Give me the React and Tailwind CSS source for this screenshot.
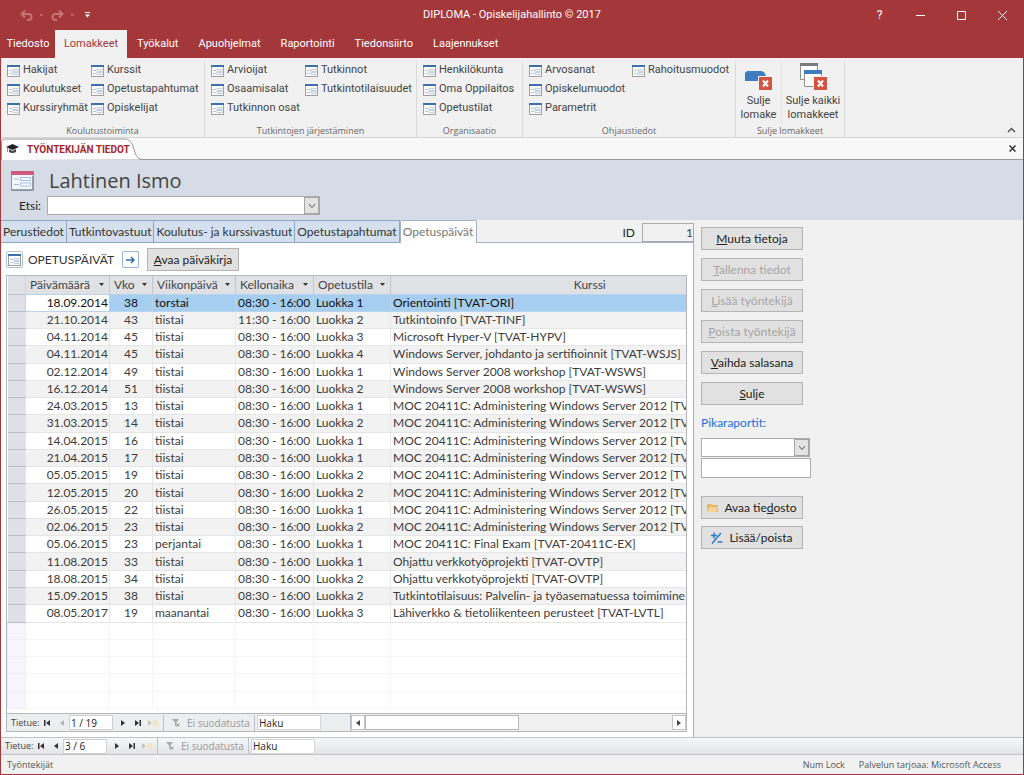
import React from 'react';

const ribbonGroups = [
  {
    title: 'Koulutustoiminta',
    width: 'w-[204px]',
    columns: [
      { width: 'w-[84px]', items: ['Hakijat', 'Koulutukset', 'Kurssiryhmät'] },
      { width: 'w-[108px]', items: ['Kurssit', 'Opetustapahtumat', 'Opiskelijat'] },
    ],
  },
  {
    title: 'Tutkintojen järjestäminen',
    width: 'w-[212px]',
    columns: [
      { width: 'w-[94px]', items: ['Arvioijat', 'Osaamisalat', 'Tutkinnon osat'] },
      { width: 'w-[108px]', items: ['Tutkinnot', 'Tutkintotilaisuudet'] },
    ],
  },
  {
    title: 'Organisaatio',
    width: 'w-[106px]',
    columns: [{ width: 'w-[96px]', items: ['Henkilökunta', 'Oma Oppilaitos', 'Opetustilat'] }],
  },
  {
    title: 'Ohjaustiedot',
    width: 'w-[213px]',
    columns: [
      { width: 'w-[103px]', items: ['Arvosanat', 'Opiskelumuodot', 'Parametrit'] },
      { width: 'w-[100px]', items: ['Rahoitusmuodot'] },
    ],
  },
];

const ribbonTabs = ['Tiedosto', 'Lomakkeet', 'Työkalut', 'Apuohjelmat', 'Raportointi', 'Tiedonsiirto', 'Laajennukset'];

const formTabs = ['Perustiedot', 'Tutkintovastuut', 'Koulutus- ja kurssivastuut', 'Opetustapahtumat', 'Opetuspäivät'];

const MOC = 'MOC 20411C: Administering Windows Server 2012 [TVAT';

const rows = [
  ['18.09.2014', '38', 'torstai', '08:30 - 16:00', 'Luokka 1', 'Orientointi [TVAT-ORI]'],
  ['21.10.2014', '43', 'tiistai', '11:30 - 16:00', 'Luokka 2', 'Tutkintoinfo [TVAT-TINF]'],
  ['04.11.2014', '45', 'tiistai', '08:30 - 16:00', 'Luokka 3', 'Microsoft Hyper-V [TVAT-HYPV]'],
  ['04.11.2014', '45', 'tiistai', '08:30 - 16:00', 'Luokka 4', 'Windows Server, johdanto ja sertifioinnit [TVAT-WSJS]'],
  ['02.12.2014', '49', 'tiistai', '08:30 - 16:00', 'Luokka 1', 'Windows Server 2008 workshop [TVAT-WSWS]'],
  ['16.12.2014', '51', 'tiistai', '08:30 - 16:00', 'Luokka 2', 'Windows Server 2008 workshop [TVAT-WSWS]'],
  ['24.03.2015', '13', 'tiistai', '08:30 - 16:00', 'Luokka 1', MOC],
  ['31.03.2015', '14', 'tiistai', '08:30 - 16:00', 'Luokka 2', MOC],
  ['14.04.2015', '16', 'tiistai', '08:30 - 16:00', 'Luokka 1', MOC],
  ['21.04.2015', '17', 'tiistai', '08:30 - 16:00', 'Luokka 1', MOC],
  ['05.05.2015', '19', 'tiistai', '08:30 - 16:00', 'Luokka 2', MOC],
  ['12.05.2015', '20', 'tiistai', '08:30 - 16:00', 'Luokka 2', MOC],
  ['26.05.2015', '22', 'tiistai', '08:30 - 16:00', 'Luokka 1', MOC],
  ['02.06.2015', '23', 'tiistai', '08:30 - 16:00', 'Luokka 2', MOC],
  ['05.06.2015', '23', 'perjantai', '08:30 - 16:00', 'Luokka 1', 'MOC 20411C: Final Exam [TVAT-20411C-EX]'],
  ['11.08.2015', '33', 'tiistai', '08:30 - 16:00', 'Luokka 1', 'Ohjattu verkkotyöprojekti [TVAT-OVTP]'],
  ['18.08.2015', '34', 'tiistai', '08:30 - 16:00', 'Luokka 2', 'Ohjattu verkkotyöprojekti [TVAT-OVTP]'],
  ['15.09.2015', '38', 'tiistai', '08:30 - 16:00', 'Luokka 2', 'Tutkintotilaisuus: Palvelin- ja työasematuessa toimimine'],
  ['08.05.2017', '19', 'maanantai', '08:30 - 16:00', 'Luokka 3', 'Lähiverkko & tietoliikenteen perusteet [TVAT-LVTL]'],
];

const FormIcon = () => (
  <svg width="13" height="12" viewBox="0 0 13 12" className="shrink-0">
    <rect x="0.5" y="0.5" width="12" height="11" fill="#fafafa" stroke="#a0a0a0" />
    <rect width="13" height="2" fill="#3f6fa8" />
    <path d="M2 5.5h3M2 8.5h3" stroke="#c4c4c4" />
    <path d="M6 4.5h5v2h-5zM6 7.5h5v2h-5z" fill="#fff" stroke="#bcd0ea" />
  </svg>
);

const FormIconLarge = () => (
  <svg width="23" height="20" viewBox="0 0 23 20" className="shrink-0">
    <rect x="0.5" y="0.5" width="22" height="19" fill="#f3f6fd" stroke="#8a93a8" />
    <rect width="23" height="4" fill="#cf5b80" />
    <path d="M3 8h5M3 13.5h5" stroke="#a9b9dc" />
    <path d="M9.500 6.500h10v3h-10zM9.500 12h10v3h-10z" fill="#fff" stroke="#a4bfe6" />
    <path d="M1 18.500h21M21.500 5v14" stroke="#9a9fae" />
  </svg>
);

const CloseBadge = ({ x, y }) => (
  <g>
    <rect x={x - 0.5} y={y - 0.5} width="14" height="14" fill="#d35440" stroke="#f1f1f1" />
    <path d={`M${x + 4} ${y + 3.5}l5 6M${x + 9} ${y + 3.5}l-5 6`} stroke="#fff" strokeWidth="2" />
  </g>
);

const CloseFormIcon = () => (
  <svg width="32" height="28" viewBox="0 0 32 28">
    <path d="M2 10l2-2h13c4 0 6 3 6 6v4H2z" fill="#3f7cbd" />
    <CloseBadge x={16} y={14} />
  </svg>
);

const CloseAllIcon = () => (
  <svg width="32" height="28" viewBox="0 0 32 28">
    <path d="M3.500 1.500h17v15h-17z" fill="#fff" stroke="#8f8f8f" />
    <path d="M3 0h18v3H3z" fill="#7b7b7b" />
    <path d="M7.500 8.500h17v15h-17z" fill="#fff" stroke="#8f8f8f" />
    <path d="M7 7h18v4H7z" fill="#3f7cbd" />
    <CloseBadge x={17} y={14} />
  </svg>
);

const Chevron = () => (
  <svg width="8" height="6" viewBox="0 0 8 6" fill="none" stroke="#555">
    <path d="M1 1l3 3.500L7 1" />
  </svg>
);

const ComboBox = ({ id, label, className }) => (
  <div className={`relative flex h-[19px] border border-[#ababab] bg-white ${className}`}>
    <select id={id} aria-label={label} className="w-full appearance-none bg-white" />
    <span className="pointer-events-none absolute top-0 right-0 flex h-full w-[15px] items-center justify-center border border-[#a5a5a5] bg-[#e3e3e3]">
      <Chevron />
    </span>
  </div>
);

const SideButton = ({ children, disabled, className = '' }) => (
  <button
    disabled={disabled}
    className={`flex h-[23px] w-[102px] items-center justify-center border border-[#b4b4b4] bg-[#e1e1e1] text-[12px] leading-[15px] text-[#222] disabled:text-[#a5a5a5] ${className}`}
  >
    {children}
  </button>
);

const NavButton = ({ label, width, color = '#333', children }) => (
  <button aria-label={label} className={`flex h-full items-center justify-center ${width}`}>
    <svg width="8" height="8" viewBox="0 0 8 8" fill={color} className="overflow-visible">
      {children}
    </svg>
  </button>
);

const RecordNav = ({ name, position, atStart }) => (
  <div className="flex h-[16px] shrink-0 items-center font-['Open_Sans',sans-serif] text-[10px] leading-[14px] text-[#444]">
    <span className="w-[33px] pl-[4px] text-[9px]">Tietue:</span>
    <NavButton label="Ensimmäinen" width="w-[14px]">
      <path d="M1 1h1.500v6H1zM7 1v6L3 4z" />
    </NavButton>
    <NavButton label="Edellinen" width="w-[15px]" color={atStart ? '#b5b5b5' : '#333'}>
      <path d="M6 1v6L2 4z" />
    </NavButton>
    <input aria-label={`${name} numero`} defaultValue={position} className="h-[15px] w-[44px] border border-[#cfcfcf] bg-white px-[1px] text-[10px] text-[#222]" />
    <NavButton label="Seuraava" width="w-[20px]">
      <path d="M2 1v6l4-3z" />
    </NavButton>
    <NavButton label="Viimeinen" width="w-[10px]">
      <path d="M1 1v6l4-3zM5.500 1H7v6H5.500z" />
    </NavButton>
    <NavButton label="Uusi" width="w-[20px]" color="#c4c4c4">
      <path d="M-1 1v6l4-3z" />
      <path d="M4 1h5v6H4z" fill="#f3e6bd" />
    </NavButton>
    <button disabled className="flex h-full w-[92px] items-center gap-[7px] border-x border-[#bfc3c8] pl-[8px] whitespace-nowrap text-[#9a9a9a]">
      <svg width="8" height="8" viewBox="0 0 8 8" className="shrink-0">
        <path d="M0 0h7L4.500 3.500V8L3 6.500v-3z" fill="#aaa" />
        <path d="M4.500 4.500l3 3m0-3l-3 3" stroke="#999" />
      </svg>
      Ei suodatusta
    </button>
    <input aria-label={`${name} haku`} defaultValue="Haku" className="ml-[2px] h-[15px] w-[64px] border border-[#d5d5d5] bg-white px-[1px] text-[10px] text-[#222]" />
  </div>
);

const TitleBar = () => (
  <header className="bg-[#a4373a] font-[Roboto,sans-serif] text-white">
    <div className="flex h-[30px] items-center">
      <div className="flex w-[200px] items-center gap-[8px] pl-[19px]">
        <button aria-label="Kumoa" className="flex items-center gap-[7px]">
          <svg width="13" height="11" viewBox="0 0 13 11" fill="none" stroke="#c57376" strokeWidth="2">
            <path d="M5 0.500L1.500 4 5 7.500M2 4h6.500a3 3 0 0 1 0 6H7" />
          </svg>
          <span className="h-[2px] w-[3px] bg-[#bd6366]" />
        </button>
        <button aria-label="Tee uudelleen" className="flex items-center gap-[7px]">
          <svg width="13" height="11" viewBox="0 0 13 11" fill="none" stroke="#c57376" strokeWidth="2">
            <path d="M8 0.500L11.500 4 8 7.500M11 4H4.500a3 3 0 0 0 0 6H6" />
          </svg>
          <span className="h-[2px] w-[3px] bg-[#bd6366]" />
        </button>
        <button aria-label="Mukauta" className="ml-[3px]">
          <svg width="5" height="6" viewBox="0 0 5 6" fill="#fff">
            <path d="M0 0h5v1H0zM0 2.500h5L2.500 5.500z" />
          </svg>
        </button>
      </div>
      <h1 className="flex-1 text-center text-[11px]">DIPLOMA - Opiskelijahallinto © 2017</h1>
      <div className="flex w-[200px] justify-end">
        <button aria-label="Ohje" className="w-[41px] text-[12px]">?</button>
        <button aria-label="Pienennä" className="flex w-[41px] items-center justify-center">
          <svg width="9" height="9" stroke="#fff"><path d="M0 4.500h9" /></svg>
        </button>
        <button aria-label="Suurenna" className="flex w-[41px] items-center justify-center">
          <svg width="9" height="9" stroke="#fff" fill="none"><path d="M0.500 0.500h8v8h-8z" /></svg>
        </button>
        <button aria-label="Sulje ohjelma" className="flex w-[41px] items-center justify-center">
          <svg width="9" height="9" stroke="#fff"><path d="M0 0l9 9M9 0L0 9" /></svg>
        </button>
      </div>
    </div>
    <nav className="flex h-[28px] text-[11px]">
      {ribbonTabs.map((tab) => (
        <button
          key={tab}
          className={
            tab === 'Lomakkeet'
              ? 'w-[72px] bg-[#f1f1f1] text-[#a4373a]'
              : tab === 'Tiedosto'
                ? 'w-[54px]'
                : 'px-[10px]'
          }
        >
          {tab}
        </button>
      ))}
    </nav>
  </header>
);

const Ribbon = () => (
  <div className="flex h-[80px] shrink-0 border-b border-[#d5d5d5] bg-[#f1f1f1] pt-[3px] font-[Roboto,sans-serif] text-[11px] text-[#444]">
    {ribbonGroups.map((group) => (
      <section key={group.title} className={`flex shrink-0 flex-col border-r border-[#dadada] ${group.width}`}>
        <div className="flex flex-1 pl-[6px]">
          {group.columns.map((column) => (
            <div key={column.items[0]} className={column.width}>
              {column.items.map((item) => (
                <button key={item} className="flex h-[19px] items-center gap-[3px] whitespace-nowrap">
                  <FormIcon />
                  {item}
                </button>
              ))}
            </div>
          ))}
        </div>
        <h2 className="text-center font-['Open_Sans',sans-serif] text-[9px] leading-[12px] text-[#666]">{group.title}</h2>
      </section>
    ))}
    <section className="flex w-[109px] shrink-0 flex-col border-r border-[#dadada]">
      <div className="flex flex-1">
        <button className="flex w-[46px] flex-col items-center border-r border-[#e2e2e2] pt-[2px] leading-[14px]">
          <CloseFormIcon />
          <span className="mt-[3px]">Sulje lomake</span>
        </button>
        <button className="flex flex-1 flex-col items-center pt-[2px] leading-[14px]">
          <CloseAllIcon />
          <span className="mt-[3px]">Sulje kaikki lomakkeet</span>
        </button>
      </div>
      <h2 className="text-center font-['Open_Sans',sans-serif] text-[9px] leading-[12px] text-[#666]">Sulje lomakkeet</h2>
    </section>
    <div className="flex flex-1 items-end justify-end pr-[7px] pb-[4px]">
      <button aria-label="Pienennä valintanauha">
        <svg width="9" height="6" fill="none" stroke="#555" strokeWidth="1.5"><path d="M1 5l3.500-3.500L8 5" /></svg>
      </button>
    </div>
  </div>
);

const DocumentTabs = () => (
  <div className="flex h-[22px] shrink-0 items-end justify-between border-b border-[#9a9a9a] bg-[#f8f8f8]">
    <button className="relative -mb-px flex h-[22px] w-[142px] items-center gap-[8px] pl-[5px] font-[Roboto,sans-serif] text-[10px] font-bold text-[#a4262c]">
      <svg width="142" height="22" viewBox="0 0 142 22" className="absolute top-0 left-0" fill="#fff" stroke="#9a9a9a">
        <path d="M0.500 22V4q0-3 3-3H124q5 0 7.500 6l3 9q2 5.500 7.500 5.500" />
      </svg>
      <svg width="13" height="10" viewBox="0 0 13 10" className="relative">
        <path d="M0 3l6.500-3L13 3 6.500 6z" fill="#222" />
        <path d="M3 5v3q3.500 2 7 0V5L6.500 7z" fill="#444" />
        <path d="M1.500 4v4" stroke="#b08a3c" />
      </svg>
      <span className="relative">TYÖNTEKIJÄN TIEDOT</span>
    </button>
    <button aria-label="Sulje välilehti" className="mr-[7px] self-center">
      <svg width="7" height="7" stroke="#333" strokeWidth="1.5"><path d="M0.500 0.500l6 6M6.500 0.500l-6 6" /></svg>
    </button>
  </div>
);

const DayTable = () => (
  <table className="h-[433px] w-[782px] table-fixed border-collapse text-[12px] leading-[14px] whitespace-nowrap text-[#3c3c3c]">
    <colgroup>
      <col className="w-[18px]" />
      <col className="w-[84px]" />
      <col className="w-[43px]" />
      <col className="w-[83px]" />
      <col className="w-[78px]" />
      <col className="w-[77px]" />
      <col />
    </colgroup>
    <thead>
      <tr className="h-[18px] bg-[#dfe1e5] text-[#444]">
        <th className="border-r border-[#d2d5da]" aria-label="Valinta" />
        {['Päivämäärä', 'Vko', 'Viikonpäivä', 'Kellonaika', 'Opetustila'].map((name) => (
          <th key={name} className="border-r border-[#c3c6ca] font-normal">
            <span className="flex items-center justify-between pr-[5px] pl-[4px]">
              {name}
              <svg width="5" height="3" fill="#333"><path d="M0 0h5L2.500 3z" /></svg>
            </span>
          </th>
        ))}
        <th className="font-normal">Kurssi</th>
      </tr>
    </thead>
    <tbody>
      {rows.map(([date, week, day, time, room, course], i) => {
        const selected = i === 0;
        const cell = selected ? 'border border-[#b9d3ea]' : 'border border-[#e6e6e6]';
        return (
          <tr key={i} className={selected ? 'bg-[#a5cef0] text-[#111]' : i % 2 ? 'bg-[#f2f2f2]' : 'bg-white'}>
            <td className="border-y border-[#b9bfc7] bg-[#dde1e7]" />
            <td className={`pr-[1px] text-right ${cell} ${selected ? 'bg-white' : ''}`}>{date}</td>
            <td className={`text-center ${cell}`}>{week}</td>
            <td className={`pl-[2px] ${cell}`}>{day}</td>
            <td className={`pl-[2px] ${cell}`}>{time}</td>
            <td className={`pl-[2px] ${cell}`}>{room}</td>
            <td className={`pl-[2px] ${cell}`}>{course}</td>
          </tr>
        );
      })}
      {/* unused grid rows below the records */}
      {[0, 1, 2, 3, 4].map((i) => (
        <tr key={i}>
          <td className="border border-[#efedf6] bg-[#f6f5fc]">&nbsp;</td>
          {[0, 1, 2, 3, 4, 5].map((c) => (
            <td key={c} className="border border-[#f5f5f5]" />
          ))}
        </tr>
      ))}
    </tbody>
  </table>
);

const SubForm = () => (
  <div className="mr-[6px] mb-[5px] ml-[5px] flex flex-1 flex-col border border-[#b3b7bd] bg-white">
    <div className="flex-1 overflow-hidden">
      <div className="w-0">
        <DayTable />
      </div>
    </div>
    <div className="flex h-[18px] items-center border-t border-[#b3b7bd] bg-[#eceef0]">
      <RecordNav name="Opetuspäivä" position="1 / 19" atStart />
      <div className="ml-auto flex h-full w-[336px] items-center border-l border-[#b3b7bd] bg-[#f1f1f1]">
        <button aria-label="Vieritä vasemmalle" className="flex h-[15px] w-[14px] items-center justify-center border border-[#c6c6c6] bg-white">
          <svg width="4" height="6" fill="#444"><path d="M4 0v6L0 3z" /></svg>
        </button>
        <div className="h-full flex-1 py-[1px]">
          <div className="h-full w-1/2 border border-[#b5b5b5] bg-white" />
        </div>
        <button aria-label="Vieritä oikealle" className="flex h-[15px] w-[14px] items-center justify-center border border-[#c6c6c6] bg-white">
          <svg width="4" height="6" fill="#444"><path d="M0 0v6l4-3z" /></svg>
        </button>
      </div>
    </div>
  </div>
);

const EmployeeForm = () => (
  <div className="flex min-w-0 flex-1 flex-col">
    <div className="flex h-[23px] shrink-0 items-end">
      {formTabs.map((tab) =>
        tab === 'Opetuspäivät' ? (
          <button key={tab} className="h-[23px] w-[77px] rounded-t-[2px] border border-b-0 border-[#a3b1c6] bg-white text-[12px] text-[#777]">
            {tab}
          </button>
        ) : (
          <button key={tab} className="h-[23px] border-t border-r border-b border-[#8fa5c4] bg-[#d5e0ee] px-[2px] text-[12px] whitespace-nowrap text-[#333]">
            {tab}
          </button>
        ),
      )}
      <div className="flex h-full flex-1 items-center justify-end border-b border-[#a3b1c6] pt-[3px]">
        <label htmlFor="employee-id" className="mr-[7px] text-[12px] text-[#222]">ID</label>
        <input id="employee-id" readOnly value="1" className="h-[19px] w-[52px] border border-[#ababab] bg-[#f1f1f1] text-right text-[12px] text-[#444]" />
      </div>
    </div>
    <div className="flex flex-1 flex-col border-r border-[#a3a9b5] bg-white">
      <div className="flex h-[32px] items-center pt-[1px] pl-[5px]">
        <button aria-label="Lomake" className="flex h-[17px] w-[17px] items-center justify-center rounded-[2px] border border-[#a9c4e4]">
          <FormIcon />
        </button>
        <h2 className="ml-[5px] w-[88px] text-[12px] whitespace-nowrap text-[#333]">OPETUSPÄIVÄT</h2>
        <button aria-label="Siirry" className="ml-[6px] flex h-[17px] w-[17px] items-center justify-center rounded-[2px] border border-[#8fb6e6]">
          <svg width="9" height="8" viewBox="0 0 9 8" fill="none" stroke="#2f6eb5" strokeWidth="1.500">
            <path d="M0 4h8M5 1l3 3-3 3" />
          </svg>
        </button>
        <button className="ml-[8px] h-[23px] w-[92px] border border-[#b4b4b4] bg-[#e1e1e1] text-[12px] text-[#222]">
          <u>A</u>vaa päiväkirja
        </button>
      </div>
      <SubForm />
    </div>
  </div>
);

const SidePanel = () => (
  <aside className="w-[329px] shrink-0 pt-[7px] pl-[7px]">
    <div className="flex flex-col gap-[8px]">
      <SideButton><span><u>M</u>uuta tietoja</span></SideButton>
      <SideButton disabled><span><u>T</u>allenna tiedot</span></SideButton>
      <SideButton disabled><span><u>L</u>isää työntekijä</span></SideButton>
      <SideButton disabled><span><u>P</u>oista työntekijä</span></SideButton>
      <SideButton><span><u>V</u>aihda salasana</span></SideButton>
      <SideButton><span><u>S</u>ulje</span></SideButton>
    </div>
    <label htmlFor="quick-report" className="mt-[10px] block text-[12px] leading-[16px] text-[#1f6fe0]">Pikaraportit:</label>
    <ComboBox id="quick-report" className="mt-[7px] w-[109px]" />
    <input aria-label="Raportin ehto" className="mt-[1px] block h-[20px] w-[110px] border border-[#ababab] bg-white" />
    <div className="mt-[18px] flex flex-col gap-[7px]">
      <SideButton className="gap-[6px]">
        <svg width="11" height="9" viewBox="0 0 11 9">
          <path d="M0 1h4l1 1h6v7H0z" fill="#e9b565" />
          <path d="M2 4h9L9 9H0z" fill="#f6d397" />
        </svg>
        <span>Avaa tie<u>d</u>osto</span>
      </SideButton>
      <SideButton className="gap-[6px]">
        <svg width="12" height="12" viewBox="0 0 12 12" stroke="#2f7ad1" strokeWidth="1.500">
          <path d="M0 3.500h6M3 0.500v6M1 11.500L10 1M6.500 10h5" />
        </svg>
        <span>Lisää/poista</span>
      </SideButton>
    </div>
  </aside>
);

export default function App() {
  return (
    <div className="flex min-h-screen flex-col border-x border-b border-[#a4373a] bg-[#f1f1f1] font-['Open_Sans',sans-serif]">
      <TitleBar />
      <Ribbon />
      <DocumentTabs />
      <main className="flex flex-1 flex-col font-['Lato',sans-serif]">
        <div className="h-[60px] shrink-0 bg-[#d6dce6] pt-[7px]">
          <div className="flex h-[27px] items-center gap-[15px] pl-[10px]">
            <FormIconLarge />
            <h2 className="font-['Open_Sans',sans-serif] text-[20px] leading-[27px] text-[#444]">Lahtinen Ismo</h2>
          </div>
          <div className="mt-[2px] flex items-center">
            <label htmlFor="find-person" className="w-[46px] pl-[18px] text-[12px] text-[#222]">Etsi:</label>
            <ComboBox id="find-person" className="w-[273px]" />
          </div>
        </div>
        <div className="flex flex-1">
          <EmployeeForm />
          <SidePanel />
        </div>
      </main>
      <div className="border-y border-[#bfc3c8] bg-gradient-to-b from-[#f6f7f8] to-[#e2e4e6]">
        <RecordNav name="Työntekijä" position="3 / 6" />
      </div>
      <footer className="flex h-[19px] shrink-0 items-center gap-[14px] pr-[22px] pl-[6px] text-[9px] text-[#555]">
        <span className="flex-1">Työntekijät</span>
        <span>Num Lock</span>
        <span>Palvelun tarjoaa: Microsoft Access</span>
      </footer>
    </div>
  );
}
